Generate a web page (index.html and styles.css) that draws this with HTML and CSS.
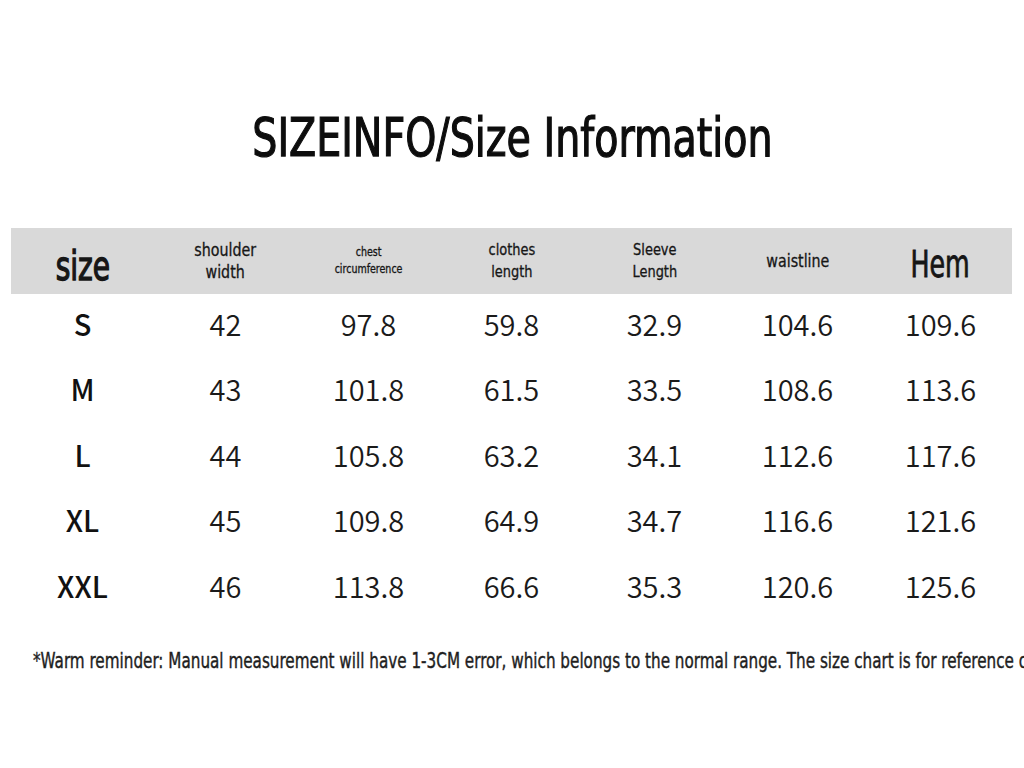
FILE: index.html
```html
<!DOCTYPE html>
<html>
<head>
<meta charset="utf-8">
<link rel="stylesheet" href="styles.css">
</head>
<body>
<div class="page">
  <h1 class="title"><span class="sq">SIZEINFO/Size Information</span></h1>
  <div class="table">
    <div class="row head">
      <div class="cell h-size"><span class="sq">size</span></div>
      <div class="cell h-md"><span class="sq">shoulder<br>width</span></div>
      <div class="cell h-xs"><span class="sq">chest<br>circumference</span></div>
      <div class="cell h-sm"><span class="sq">clothes<br>length</span></div>
      <div class="cell h-sm"><span class="sq">Sleeve<br>Length</span></div>
      <div class="cell h-md"><span class="sq">waistline</span></div>
      <div class="cell h-hem"><span class="sq">Hem</span></div>
    </div>
    <div class="row"><div class="cell sz">S</div><div class="cell">42</div><div class="cell">97.8</div><div class="cell">59.8</div><div class="cell">32.9</div><div class="cell">104.6</div><div class="cell">109.6</div></div>
    <div class="row"><div class="cell sz">M</div><div class="cell">43</div><div class="cell">101.8</div><div class="cell">61.5</div><div class="cell">33.5</div><div class="cell">108.6</div><div class="cell">113.6</div></div>
    <div class="row"><div class="cell sz">L</div><div class="cell">44</div><div class="cell">105.8</div><div class="cell">63.2</div><div class="cell">34.1</div><div class="cell">112.6</div><div class="cell">117.6</div></div>
    <div class="row"><div class="cell sz">XL</div><div class="cell">45</div><div class="cell">109.8</div><div class="cell">64.9</div><div class="cell">34.7</div><div class="cell">116.6</div><div class="cell">121.6</div></div>
    <div class="row"><div class="cell sz">XXL</div><div class="cell">46</div><div class="cell">113.8</div><div class="cell">66.6</div><div class="cell">35.3</div><div class="cell">120.6</div><div class="cell">125.6</div></div>
  </div>
  <div class="note-wrap"><p class="note">*Warm reminder: Manual measurement will have 1-3CM error, which belongs to the normal range. The size chart is for reference only.</p></div>
</div>
</body>
</html>
```
FILE: styles.css
```css
html, body {
  margin: 0;
  padding: 0;
  background: #ffffff;
  overflow: hidden;
}
.page {
  width: 1024px;
  height: 768px;
  padding-top: 108px;
  box-sizing: border-box;
  color: #111111;
  overflow: hidden;
}
.sq {
  display: inline-block;
  transform: scaleX(0.84);
  transform-origin: center;
}
.title {
  margin: 0;
  text-align: center;
  font-family: "DejaVu Sans Condensed", "DejaVu Sans", sans-serif;
  font-stretch: condensed;
  font-weight: 400;
  font-size: 53px;
  line-height: 60px;
  color: #0d0d0d;
  -webkit-text-stroke: 1.2px #0d0d0d;
  padding-left: 0;
}
.title .sq {
  transform: scaleX(0.83);
  white-space: nowrap;
}
.table {
  margin-top: 60px;
  margin-left: 11px;
  width: 1001px;
}
.row {
  display: grid;
  grid-template-columns: repeat(7, 143px);
  height: 65.5px;
  align-items: center;
}
.row.head {
  background: #d9d9d9;
  height: 66px;
}
.cell {
  text-align: center;
  font-family: "Noto Sans CJK SC", "Noto Sans", sans-serif;
  font-weight: 350;
  font-size: 29px;
  color: #1a1a1a;
  padding-bottom: 8px;
}
.cell.sz {
  font-weight: 500;
  color: #111111;
}
.head .cell {
  font-family: "DejaVu Sans Condensed", "DejaVu Sans", sans-serif;
  font-stretch: condensed;
  font-weight: 400;
  color: #161616;
  padding-bottom: 0;
  -webkit-text-stroke: 0.3px #161616;
}
.h-size { font-size: 40px; line-height: 40px; padding-top: 10px; -webkit-text-stroke: 1.3px #161616 !important; }
.h-size .sq { transform: scaleX(0.78); }
.h-hem { font-size: 38px; line-height: 40px; padding-top: 6px; -webkit-text-stroke: 0.8px #161616 !important; }
.h-hem .sq { transform: scaleX(0.74); }
.h-md { font-size: 18px; line-height: 22px; }
.h-md .sq { transform: scaleX(0.88); }
.h-sm { font-size: 16px; line-height: 22px; }
.h-sm .sq { transform: scaleX(0.9); }
.h-xs { font-size: 12px; line-height: 17px; }
.h-xs .sq { transform: scaleX(0.88); }
.note-wrap {
  width: 1024px;
  overflow: hidden;
  margin-top: 25px;
}
.note {
  margin: 0 0 0 33px;
  white-space: nowrap;
  font-family: "DejaVu Sans Condensed", "DejaVu Sans", sans-serif;
  font-stretch: condensed;
  font-size: 21px;
  line-height: 28px;
  color: #1e1e1e;
  -webkit-text-stroke: 0.4px #1e1e1e;
  transform: scaleX(0.805);
  transform-origin: left center;
}
```
